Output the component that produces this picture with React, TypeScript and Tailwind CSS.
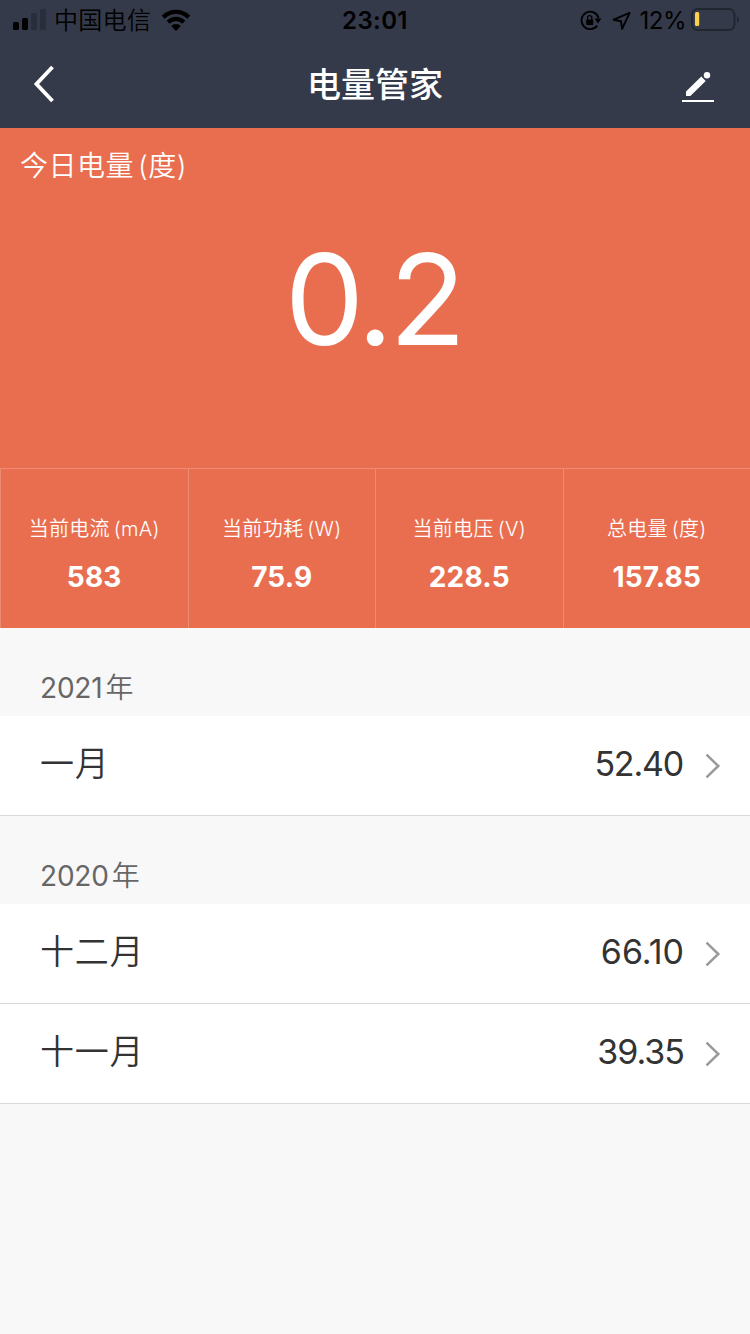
import type { ReactNode } from 'react';

const STATS = [
  { label: '当前电流', unit: '(mA)', value: '583' },
  { label: '当前功耗', unit: '(W)', value: '75.9' },
  { label: '当前电压', unit: '(V)', value: '228.5' },
  { label: '总电量', unit: '(度)', value: '157.85' },
];

const YEARS = [
  { year: '2021', months: [{ name: '一月', value: '52.40', spacing: 'tracking-[-1.2px] mr-px' }] },
  {
    year: '2020',
    months: [
      { name: '十二月', value: '66.10', spacing: 'tracking-normal' },
      { name: '十一月', value: '39.35', spacing: 'tracking-[-1px]' },
    ],
  },
];

function StatusBar() {
  return (
    <div className="grid h-10 grid-cols-[1fr_auto_1fr] items-center text-2xl leading-[38px] text-black">
      <div className="flex h-10 items-center pl-[13px]">
        <svg width="34" height="40" viewBox="0 0 34 40">
          <rect x="0" y="22" width="6" height="8" rx="1.5" />
          <rect x="9" y="18" width="6" height="12" rx="1.5" />
          <rect x="18" y="13" width="6" height="17" rx="1.5" fill="#282e3b" />
          <rect x="27" y="9" width="6" height="21" rx="1.5" fill="#282e3b" />
        </svg>
        <span className="ml-[7px] pt-[2px] font-[350] tracking-[0.3px]">中国电信</span>
        <svg className="ml-[10px]" width="30" height="40" viewBox="0 0 30 40">
          <path d="M2.2 17.2a18 18 0 0 1 25.6 0M7.2 22.2a11 11 0 0 1 15.6 0" fill="none" stroke="#000" strokeWidth="4.2" />
          <path d="M15 31l-4.8-4.9a6.8 6.8 0 0 1 9.6 0z" />
        </svg>
      </div>
      <span className="pt-[2px] font-semibold tracking-[0.4px]">23:01</span>
      <div className="flex h-10 items-center justify-end pr-[10px]">
        <svg width="22" height="40" viewBox="0 0 22 40">
          <path d="M17.2 25.6A8.7 8.7 0 1 1 18.6 18" fill="none" stroke="#000" strokeWidth="1.9" />
          <path d="M14.6 18.6h6.8L18 23.4z" />
          <rect x="6.2" y="19.4" width="7" height="5.6" rx="0.8" />
          <path d="M7.6 20v-2.2a2.1 2.1 0 0 1 4.2 0V20" fill="none" stroke="#000" strokeWidth="1.3" />
        </svg>
        <svg className="ml-[10px]" width="20" height="40" viewBox="0 0 20 40">
          <path d="M17.6 12.9L1.6 19.7l7.5 1.6 1 7.5z" fill="none" stroke="#000" strokeWidth="1.9" strokeLinejoin="round" />
        </svg>
        <span className="ml-2 pt-[2px] tracking-[-0.5px]">12%</span>
        <svg className="ml-[5px]" width="49" height="40" viewBox="0 0 49 40">
          <rect x="1" y="9" width="42.5" height="21" rx="5.5" fill="none" stroke="#212631" strokeWidth="2" />
          <rect x="4" y="12" width="4.2" height="14" rx="1.5" fill="#fdd04b" />
          <path d="M46 16.5c2.6 1 2.6 5 0 6z" fill="#212631" />
        </svg>
      </div>
    </div>
  );
}

function NavBar() {
  return (
    <header className="grid h-[88px] grid-cols-[1fr_auto_1fr] items-center text-white">
      <svg className="ml-[33px]" width="22" height="38" viewBox="0 0 22 38">
        <path d="M19.5 2L3.5 19l16 17" fill="none" stroke="currentColor" strokeWidth="3.9" />
      </svg>
      <h1 className="pt-[2px] text-[34px] leading-[86px] font-medium">电量管家</h1>
      <svg className="mt-2 mr-9 justify-self-end" width="32" height="32" viewBox="0 0 32 32">
        <path d="M4 24v-4.4L19.3 4.5l4.4 4.4L8.4 24z" fill="currentColor" />
        <circle cx="25" cy="3.2" r="3.2" fill="currentColor" />
        <path d="M0 29h32" stroke="currentColor" strokeWidth="2" />
      </svg>
    </header>
  );
}

function Stat({ label, unit, value }: { label: string; unit: string; value: string }) {
  return (
    <div className="flex flex-col items-center border-l border-white/20 pt-[45px]">
      <p className="text-[20px] leading-[30px] font-[350] tracking-[0.3px] whitespace-nowrap">
        {label}
        <span className="ml-[4px]">{unit}</span>
      </p>
      <p className="mt-[13px] text-[28px] leading-[40px] font-bold tracking-[0.2px]">{value}</p>
    </div>
  );
}

function MonthRow({ name, value, spacing }: { name: string; value: string; spacing: string }) {
  return (
    <li className="flex h-[100px] items-center border-b border-[#d9d9d9] bg-white pr-[29px] pl-10 text-[#333]">
      <span className="flex-1 pb-1 text-[34px] leading-[50px] font-[350] tracking-[0.8px]">{name}</span>
      <span className={`pb-1 text-[34px] leading-[50px] ${spacing}`}>{value}</span>
      <svg className="ml-[21px]" width="16" height="26" viewBox="0 0 16 26">
        <path d="M1.5 1.7L13.3 13l-11.8 11.3" fill="none" stroke="#999" strokeWidth="2.5" />
      </svg>
    </li>
  );
}

function YearSection({ year, children }: { year: string; children: ReactNode }) {
  return (
    <section>
      <h2 className="h-[88px] pt-[39px] pl-10 text-[28px] leading-[42px] font-normal tracking-[-0.2px] text-[#666]">
        {year}
        <span className="ml-[3px] font-[350]">年</span>
      </h2>
      <ul>{children}</ul>
    </section>
  );
}

export default function App() {
  return (
    <div className="min-h-[1334px] w-[750px] bg-[#f8f8f8] font-[Inter,'Noto_Sans_CJK_SC',sans-serif]" lang="zh-CN">
      <div className="bg-[#343a49]">
        <StatusBar />
        <NavBar />
      </div>

      <div className="flex h-[500px] flex-col bg-[#e96e50] text-white">
        <p className="pt-[18px] pl-5 text-[28px] leading-[40px] font-[350] tracking-[0.5px]">
          今日电量<span className="ml-[4px]">(度)</span>
        </p>
        <p className="mt-[35px] pr-[3px] text-center text-[126px] leading-[156px] tracking-[-4px]">0.2</p>
        <div className="mt-auto grid h-[160px] grid-cols-4 border-t border-white/20">
          {STATS.map((stat) => (
            <Stat key={stat.label} {...stat} />
          ))}
        </div>
      </div>

      {YEARS.map(({ year, months }) => (
        <YearSection key={year} year={year}>
          {months.map((month) => (
            <MonthRow key={month.name} {...month} />
          ))}
        </YearSection>
      ))}
    </div>
  );
}
